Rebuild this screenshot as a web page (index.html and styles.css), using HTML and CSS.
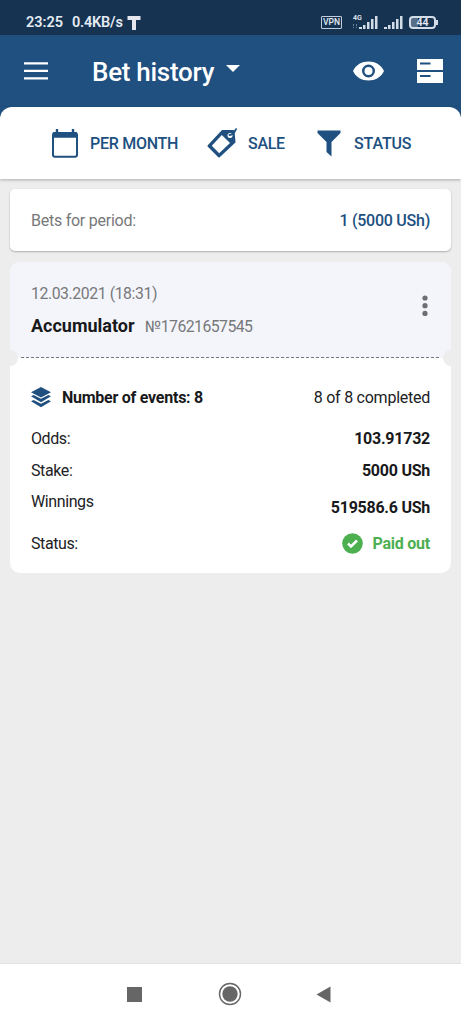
FILE: index.html
```html
<!DOCTYPE html>
<html lang="en">
<head>
<meta charset="utf-8">
<title>Bet history</title>
<link rel="stylesheet" href="styles.css">
</head>
<body>
<div class="screen">
  <div class="statusbar">
    <span class="clock">23:25</span>
    <span class="speed">0.4KB/s</span>
    <svg class="t-icon" width="14" height="14" viewBox="0 0 14 14"><path d="M0.500 0h13v4h-4.500v10h-4v-10h-4.500z" fill="#e6e6ee"/></svg>
    <span class="vpn">VPN</span>
    <span class="mobile"><span class="net">4G</span>
      <svg width="26" height="14" viewBox="0 0 26 14"><path fill="#d3dde7" d="M7 11h3v2H7zM11 9h2.500v4H11zM15 6h2.500v7H15zM19 3h2.500v10H19zM23 0h2.500v13H23z"/><path d="M1.500 8v4M4.500 8v4" stroke="#70869c" stroke-dasharray="2 1"/></svg>
    </span>
    <svg class="signal" width="19" height="14" viewBox="7 0 19 14"><path fill="#d3dde7" d="M7 11h3v2H7zM11 9h2.500v4H11zM15 6h2.500v7H15zM19 3h2.500v10H19zM23 0h2.500v13H23z"/></svg>
    <span class="battery">44</span>
  </div>
  <header class="appbar">
    <svg class="menu" width="24" height="18" viewBox="0 0 24 18"><path d="M0 1.300h24M0 8.800h24M0 16.300h24" stroke="#fff" stroke-width="2.200"/></svg>
    <h1>Bet history</h1>
    <svg class="caret" width="14" height="7" viewBox="0 0 14 7"><path d="M0 0h14L7 7z" fill="#fff"/></svg>
    <svg class="eye" width="31" height="20" viewBox="0 0 31 20"><path fill="#fff" fill-rule="evenodd" d="M0 10C3 3.500 9 .5 15.500 .5S28 3.500 31 10C28 16.500 22 19.500 15.500 19.500S3 16.500 0 10zM15.500 3.500a6.500 6.500 0 1 0 0 13a6.500 6.500 0 0 0 0-13z"/><circle cx="15.500" cy="10" r="4" fill="#fff"/></svg>
    <svg class="coupon" width="26" height="24" viewBox="0 0 26 24"><path fill="#fff" d="M0 0h26v11H0zM0 13h26v11H0z"/><path d="M3 4.500h10.500M3 17h10.500" stroke="#20507f" stroke-width="2.200"/></svg>
  </header>
  <nav class="filters">
    <svg class="calendar" width="26" height="29" viewBox="0 0 26 29"><g fill="none" stroke="#20507f"><rect x="1" y="4" width="24" height="23.700" rx="2" stroke-width="2"/><path d="M1 6h24" stroke-width="5.500"/><path d="M5 0v5M21 0v5" stroke-width="2.400"/></g></svg>
    <span class="f-month">PER MONTH</span>
    <svg class="tag" width="30" height="30" viewBox="0 0 30 30"><path fill="#20507f" stroke="#20507f" stroke-width="2" stroke-linejoin="round" d="M1.500 18L15.500 3H26.500L27.500 14L12 28.500z"/><path d="M4.800 17.800L14.800 7L23 15L12.200 25.300z" fill="#fff"/><circle cx="23" cy="7.500" r="2.500" fill="#fff"/><path d="M22.500 7Q26.500 7 29 1.200" fill="none" stroke="#20507f" stroke-width="1.800" stroke-linecap="round"/></svg>
    <span class="f-sale">SALE</span>
    <svg class="funnel" width="24" height="27" viewBox="0 0 24 27"><path d="M.5 .5h23v2.500L14.500 12v14.500L9.500 22V12L.5 3z" fill="#20507f"/></svg>
    <span class="f-status">STATUS</span>
  </nav>
  <main>
    <section class="summary"><span>Bets for period:</span><b>1 (5000 USh)</b></section>
    <article class="ticket">
      <div class="ticket-head">
        <div>
          <div class="date">12.03.2021 (18:31)</div>
          <div class="kind"><b>Accumulator</b><span>№17621657545</span></div>
        </div>
        <svg class="more" width="6" height="22" viewBox="0 0 6 22"><g fill="#6d6e71"><circle cx="3" cy="3" r="2.600"/><circle cx="3" cy="10.700" r="2.600"/><circle cx="3" cy="18.400" r="2.600"/></g></svg>
      </div>
      <div class="tear"><svg width="419" height="2" viewBox="0 0 419 2"><path d="M0 .5h419" stroke="#77787d" stroke-width="1" stroke-dasharray="3 2"/></svg></div>
      <div class="ticket-body">
        <div class="row events">
          <svg width="20" height="21" viewBox="0 0 20 21"><g fill="#20507f"><path d="M10 0l10 5.200-10 5.200L0 5.200z"/><path d="M0 9.300l2.600-1.300L10 11.800l7.400-3.800L20 9.300 10 15.200z"/><path d="M0 14.300l2.600-1.300L10 16.800l7.400-3.800 2.600 1.300L10 20.200z"/></g></svg>
          <b>Number of events: 8</b><span class="done">8 of 8 completed</span>
        </div>
        <div class="row odds"><span>Odds:</span><b>103.91732</b></div>
        <div class="row"><span>Stake:</span><b>5000 USh</b></div>
        <div class="row winnings"><span>Winnings</span><b>519586.6 USh</b></div>
        <div class="row status"><span>Status:</span>
          <span class="paid"><svg width="21" height="21" viewBox="0 0 21 21"><circle cx="10.500" cy="10.500" r="10.300" fill="#4caf50"/><path d="M6 10.500l3 3 6-6" fill="none" stroke="#fff" stroke-width="2.500"/></svg>Paid out</span></div>
      </div>
    </article>
  </main>
  <footer class="navbar">
    <svg class="recent" width="15" height="15"><rect width="15" height="15" fill="#666"/></svg>
    <svg class="home" width="24" height="24" viewBox="0 0 24 24"><circle cx="12" cy="12" r="10.500" fill="none" stroke="#666" stroke-width="1.400"/><circle cx="12" cy="12" r="7.700" fill="#666"/></svg>
    <svg class="back" width="15" height="17" viewBox="0 0 15 17"><path d="M14.500.5v16L.5 8.500z" fill="#666"/></svg>
  </footer>
</div>
</body>
</html>
```
FILE: styles.css
```css
* { box-sizing: border-box; }
body { margin: 0; font-family: Roboto, "Liberation Sans", sans-serif; color: #202124; }
svg { display: block; flex: none; }
b { font-weight: 700; }
.screen { width: 461px; height: 1024px; display: flex; flex-direction: column; background: #ededed; overflow: hidden; }
.statusbar { height: 35px; flex: none; background: #163452; color: #e4ebf2; display: flex; align-items: center; padding: 10px 24px 0 26px; font-size: 14.500px; font-weight: 600; white-space: nowrap; }
.clock { width: 46px; }
.speed { width: 55px; letter-spacing: -0.200px; }
.vpn { margin-left: 180px; width: 21px; height: 13px; border: 1px solid #c2cedb; border-radius: 1px; font-size: 8.500px; font-weight: 500; line-height: 11px; text-align: center; }
.mobile { position: relative; margin-left: 10px; }
.net { position: absolute; left: 1px; top: -2px; font-size: 7px; line-height: 8px; }
.signal { margin-left: 6px; }
.battery { position: relative; margin-left: 6px; width: 27px; height: 13px; border: 2px solid #d3dde7; border-radius: 4px; font-size: 10.500px; line-height: 9px; text-align: center; background: linear-gradient(90deg, #566e87 30%, transparent 30%); }
.battery::after { content: ""; position: absolute; right: -4px; top: 2px; width: 2px; height: 5px; background: #d3dde7; }
.appbar { height: 72px; flex: none; background: #20507f; color: #fff; display: flex; padding: 0 18px 0 24px; }
.menu { margin-top: 27px; }
h1 { margin: 21px 0 0 44px; width: 135px; font-size: 26px; letter-spacing: -0.280px; line-height: 32px; font-weight: 500; white-space: nowrap; }
.caret { margin-top: 30px; }
.eye { margin: 26px 0 0 113px; }
.coupon { margin: 24px 0 0 33px; }
.filters { position: relative; z-index: 0; height: 72px; flex: none; display: flex; align-items: center; padding-left: 52px; color: #20507f; font-size: 16px; letter-spacing: -0.280px; font-weight: 500; box-shadow: 0 1px 3px #0004; white-space: nowrap; }
.filters::before { content: ""; position: absolute; z-index: -1; inset: 0 0 50px; background: #20507f; }
.filters::after { content: ""; position: absolute; z-index: -1; inset: 0; background: #fff; border-radius: 12px 12px 0 0; }
.f-month { margin-left: 12px; width: 117px; }
.f-sale { margin-left: 11px; width: 69px; }
.f-status { margin-left: 13px; letter-spacing: -0.150px; }
main { flex: 1; padding: 10px 10px 0; }
.summary { height: 62px; padding: 0 21px; background: #fff; border-radius: 5px; box-shadow: 0 1px 2px #0004; display: flex; align-items: center; justify-content: space-between; color: #77787a; font-size: 16px; letter-spacing: -0.250px; }
.summary b { font-weight: 500; color: #20507f; }
.ticket { margin-top: 11px; border-radius: 10px; overflow: hidden; background: #fff; }
.ticket-head { height: 95px; padding: 21px 23px 0 21px; display: flex; justify-content: space-between; background: #f4f5fa; }
.date { font-size: 15.800px; letter-spacing: -0.420px; line-height: 22px; color: #77787a; }
.kind { display: flex; align-items: baseline; margin-top: 9px; line-height: 24px; }
.kind b { width: 114px; font-size: 18px; color: #18191b; }
.kind span { font-size: 15.800px; letter-spacing: -0.540px; color: #77787a; }
.more { margin-top: 12px; }
.tear { height: 2px; display: flex; justify-content: center; position: relative; background: linear-gradient(#f4f5fa 50%, #fff 50%); }
.tear::before, .tear::after { content: ""; position: absolute; top: -7px; width: 16px; height: 16px; border-radius: 50%; background: #ededed; }
.tear::before { left: -8px; }
.tear::after { right: -8px; }
.ticket-body { height: 214px; padding: 28px 21px 0; font-size: 16px; letter-spacing: -0.250px; }
.row { height: 31.500px; line-height: 22px; display: flex; justify-content: space-between; }
.row b { color: #18191b; }
.row > span:first-child { letter-spacing: -0.400px; }
.events { height: 41px; }
.events b { margin-left: 11px; }
.done { margin-left: auto; }
.winnings { height: 41.500px; }
.winnings b { margin-top: 5.500px; }
.paid { display: flex; gap: 10px; color: #4caf50; font-weight: 700; }
.navbar { height: 61px; flex: none; background: #fff; display: flex; align-items: center; padding-left: 127px; border-top: 1px solid #e2e2e2; }
.home { margin-left: 76px; }
.back { margin-left: 74px; }
```
